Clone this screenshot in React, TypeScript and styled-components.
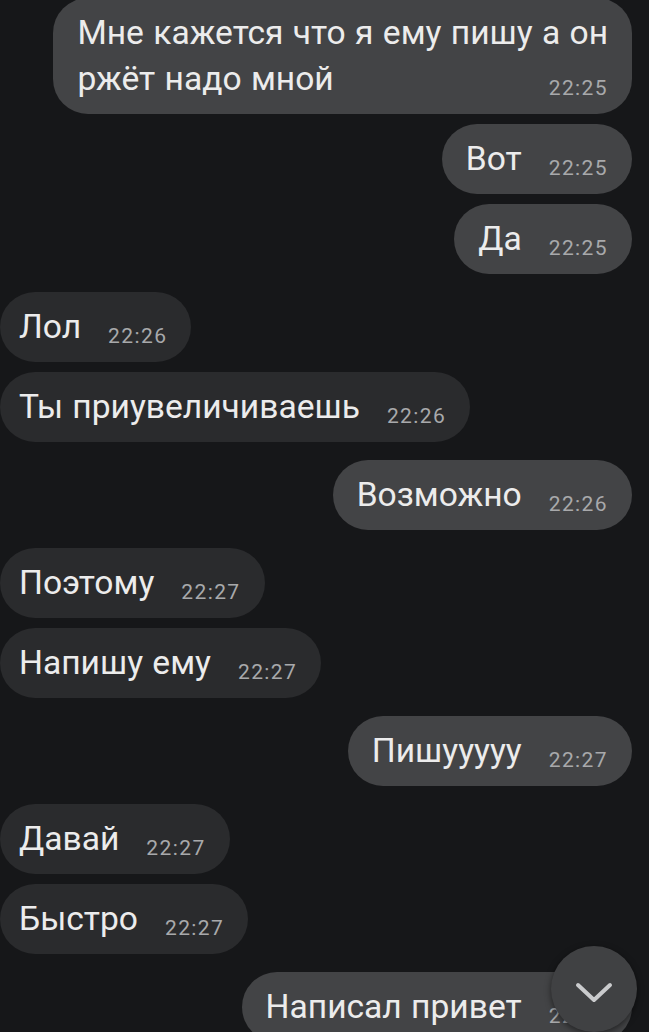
import styled, { createGlobalStyle } from 'styled-components';

const GlobalStyle = createGlobalStyle`
  html, body {
    margin: 0;
    padding: 0;
    background: #161719;
  }
  body {
    font-family: Roboto, "Noto Sans", "Liberation Sans", sans-serif;
  }
  * {
    box-sizing: border-box;
  }
`;

const Screen = styled.div`
  position: relative;
  width: 649px;
  height: 1032px;
  overflow: hidden;
  background: #161719;
`;

const Feed = styled.div`
  display: flex;
  flex-direction: column;
  padding: 0 17px 0 0;
`;

const Bubble = styled.div<{ $out: boolean; $gap: number }>`
  display: flow-root;
  align-self: ${(p) => (p.$out ? 'flex-end' : 'flex-start')};
  max-width: 580px;
  margin-top: ${(p) => p.$gap}px;
  padding: 12px 24px 12px ${(p) => (p.$out ? 24 : 19)}px;
  border-radius: 35px;
  background: ${(p) => (p.$out ? '#434446' : '#2a2b2d')};
  color: #ececec;
  font-size: 33.6px;
  line-height: 46px;
  word-spacing: 1px;
`;

const Line = styled.span<{ $last: boolean }>`
  display: ${(p) => (p.$last ? 'inline' : 'block')};
`;

// floats to the right of the last line of text
const Time = styled.span`
  float: right;
  margin: 22px 0 0 27px;
  font-size: 21px;
  line-height: 21px;
  letter-spacing: 1.4px;
  word-spacing: 0;
  color: #a8a9ab;
`;

const ScrollDown = styled.button`
  position: absolute;
  left: 551px;
  top: 946px;
  width: 86px;
  height: 86px;
  border: none;
  border-radius: 50%;
  background: #404143;
  box-shadow: 0 2px 6px rgba(0, 0, 0, 0.5);
  display: flex;
  align-items: center;
  justify-content: center;
  padding: 6px 0 0 0;
`;

interface IMessage {
  out: boolean;
  lines: string[];
  time: string;
}

const messages: IMessage[] = [
  { out: true, lines: ['Мне кажется что я ему пишу а он', 'ржёт надо мной'], time: '22:25' },
  { out: true, lines: ['Вот'], time: '22:25' },
  { out: true, lines: ['Да'], time: '22:25' },
  { out: false, lines: ['Лол'], time: '22:26' },
  { out: false, lines: ['Ты приувеличиваешь'], time: '22:26' },
  { out: true, lines: ['Возможно'], time: '22:26' },
  { out: false, lines: ['Поэтому'], time: '22:27' },
  { out: false, lines: ['Напишу ему'], time: '22:27' },
  { out: true, lines: ['Пишууууу'], time: '22:27' },
  { out: false, lines: ['Давай'], time: '22:27' },
  { out: false, lines: ['Быстро'], time: '22:27' },
  { out: true, lines: ['Написал привет'], time: '22:27' },
];

const App = () => {
  return (
    <Screen>
      <GlobalStyle />
      <Feed>
        {messages.map((m, i) => {
          // same sender keeps bubbles tighter
          const gap = i === 0 ? -2 : messages[i - 1].out === m.out ? 10 : 18;
          const last = m.lines.length - 1;
          return (
            <Bubble key={i} $out={m.out} $gap={gap}>
              {m.lines.slice(0, last).map((l, j) => (
                <Line key={j} $last={false}>{l}</Line>
              ))}
              <Time>{m.time}</Time>
              <Line $last>{m.lines[last]}</Line>
            </Bubble>
          );
        })}
      </Feed>
      <ScrollDown aria-label="scroll down">
        <svg width="38" height="22" viewBox="0 0 38 22" fill="none">
          <path d="M3 4 L19 19 L35 4" stroke="#cacbcd" strokeWidth="4" strokeLinecap="round" strokeLinejoin="round" />
        </svg>
      </ScrollDown>
    </Screen>
  );
};

export default App;
